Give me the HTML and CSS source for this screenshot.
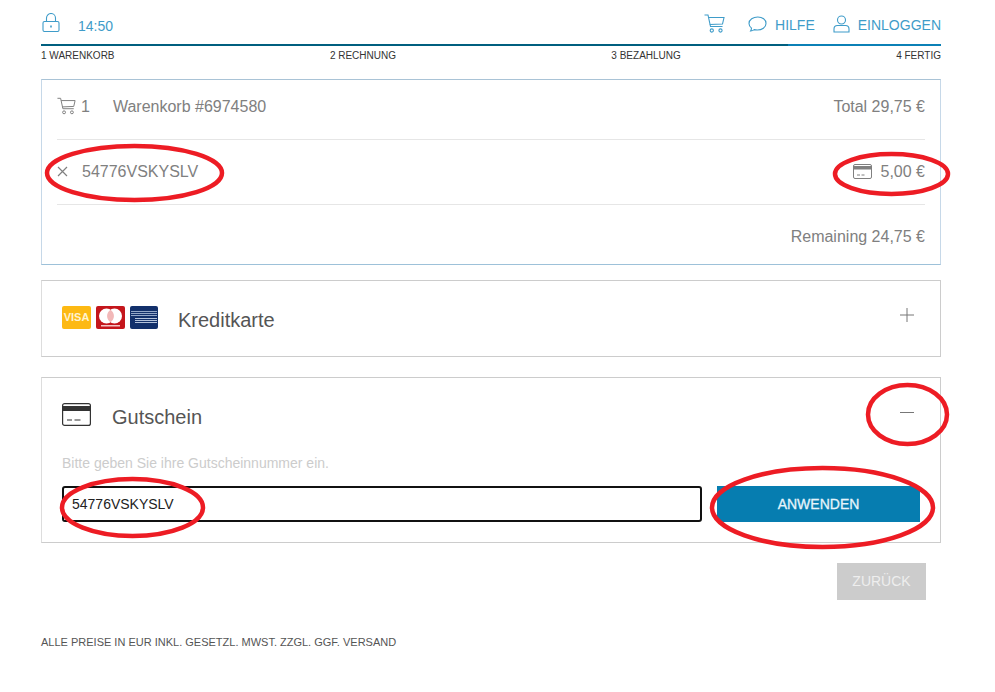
FILE: index.html
```html
<!DOCTYPE html>
<html lang="de">
<head>
<meta charset="utf-8">
<title>Gutschein</title>
<link rel="stylesheet" href="styles.css">
</head>
<body>
<div class="page">
  <header class="top">
    <div class="top-left">
      <svg class="ico-lock" viewBox="0 0 18 19" fill="none" stroke="currentColor" stroke-width="1.1"><rect x="1" y="8.500" width="16" height="10" rx="1.500"/><path d="M4.500 8.500V5a4.500 4.500 0 0 1 9 0v3.500"/><path d="M9 12.500v2" stroke-width="1.600"/></svg>
      <span class="time">14:50</span>
    </div>
    <nav class="top-right">
      <svg class="ico-cart" viewBox="0 0 21 19" fill="none" stroke="currentColor" stroke-width="1.1"><path d="M0.500 1H4l2.500 11.500h12"/><path d="M4.600 3.500H20l-1.500 6.500L5.800 10.500"/><circle cx="7.800" cy="16.500" r="1.600"/><circle cx="16.500" cy="16.500" r="1.600"/></svg>
      <a class="link link-help"><svg class="ico-chat" viewBox="0 0 19 16" fill="none" stroke="currentColor" stroke-width="1.1"><path d="M2.600 15c1.300-.1 2.600-.6 3.600-1.400 1 .3 2 .4 3.100.4 4.600 0 8.700-2.600 8.700-6.600S14.400 1 9.800 1 1 3.500 1 7.400c0 1.900 1 3.500 2.500 4.700-.1 1-.4 2.100-.9 2.900z"/></svg>HILFE</a>
      <a class="link"><svg class="ico-user" viewBox="0 0 17 18" fill="none" stroke="currentColor" stroke-width="1.1"><circle cx="8.500" cy="5" r="4"/><path d="M1 17v-3c0-2 1.500-3.500 3.500-3.500h8c2 0 3.500 1.500 3.500 3.500v3z"/></svg>EINLOGGEN</a>
    </nav>
  </header>
  <div class="progress"><div class="progress-done"></div></div>
  <div class="steps">
    <span>1 WARENKORB</span><span>2 RECHNUNG</span><span>3 BEZAHLUNG</span><span>4 FERTIG</span>
  </div>

  <section class="summary">
    <div class="row row-head">
      <div class="cell">
        <svg class="ico-cart-sm" viewBox="0 0 21 19" fill="none" stroke="currentColor" stroke-width="1.1"><path d="M0.500 1H4l2.500 11.500h12"/><path d="M4.600 3.500H20l-1.500 6.500L5.800 10.500"/><circle cx="7.800" cy="16.500" r="1.600"/><circle cx="16.500" cy="16.500" r="1.600"/></svg>
        <span class="count">1</span>
        <span>Warenkorb #6974580</span>
      </div>
      <span>Total 29,75 €</span>
    </div>
    <div class="row row-item">
      <div class="cell">
        <svg class="ico-x" viewBox="0 0 11 11" fill="none" stroke="currentColor" stroke-width="1.200"><path d="M1 1l9 9M10 1l-9 9"/></svg>
        <span>54776VSKYSLV</span>
      </div>
      <div class="cell">
        <svg class="ico-card-sm" viewBox="0 0 19 15" fill="none" stroke="currentColor" stroke-width="1"><rect x="0.500" y="0.500" width="18" height="14" rx="1.500"/><rect x="0.500" y="2" width="18" height="3.500" fill="currentColor" stroke="none"/><path d="M4 11h3M8.500 11h3"/></svg>
        <span>5,00 €</span>
      </div>
    </div>
    <div class="row row-foot"><span>Remaining 24,75 €</span></div>
  </section>

  <section class="panel panel-credit">
    <div class="cards">
      <div class="card card-visa">VISA</div>
      <svg class="card-svg" viewBox="0 0 29 23"><rect width="29" height="23" rx="2" fill="#c4161c"/><circle cx="10.500" cy="10" r="7.500" fill="#fff"/><circle cx="18.500" cy="10" r="7.500" fill="#fff"/><path d="M14.500 3.700a7.500 7.500 0 0 1 0 12.600a7.500 7.500 0 0 1 0-12.600z" fill="#f2b8b8"/><rect x="5" y="19" width="19" height="1.500" fill="#f3c4c4"/></svg>
      <svg class="card-svg" viewBox="0 0 28 23"><rect width="28" height="23" rx="2" fill="#12306b"/><path d="M1 5.500h26M1 7.500h26M1 9.500h26" stroke="#93a7c8" stroke-width="1.200"/><path d="M5 12.500h22M5 14.500h22M5 16.500h22" stroke="#b4c3db" stroke-width="1.200"/></svg>
    </div>
    <h2 class="panel-title title-credit">Kreditkarte</h2>
    <svg class="toggle toggle-plus" viewBox="0 0 14 14" fill="none" stroke="#777" stroke-width="1"><path d="M7 0v14M0 7h14"/></svg>
  </section>

  <section class="panel panel-voucher">
    <div class="voucher-head">
      <svg class="ico-card" viewBox="0 0 29 23" fill="none" stroke="#333" stroke-width="1.200"><rect x="0.600" y="0.600" width="27.800" height="21.800" rx="2"/><rect x="0.600" y="3" width="27.800" height="5" fill="#333" stroke="none"/><path d="M5 17h5M12.500 17h6"/></svg>
      <h2 class="panel-title title-voucher">Gutschein</h2>
      <svg class="toggle toggle-minus" viewBox="0 0 14 1" fill="none" stroke="#777" stroke-width="1"><path d="M0 .5h14"/></svg>
    </div>
    <p class="hint">Bitte geben Sie ihre Gutscheinnummer ein.</p>
    <div class="voucher-form">
      <input class="voucher-input" type="text" value="54776VSKYSLV">
      <button class="apply" type="button">ANWENDEN</button>
    </div>
  </section>

  <div class="actions"><button class="back" type="button">ZURÜCK</button></div>
  <p class="legal">ALLE PREISE IN EUR INKL. GESETZL. MWST. ZZGL. GGF. VERSAND</p>
</div>

<svg class="marks" viewBox="0 0 995 692" fill="none" stroke="#ed1c24" stroke-width="4.500">
  <ellipse cx="134.500" cy="173" rx="87.500" ry="27"/>
  <ellipse cx="891.500" cy="174" rx="56.500" ry="20"/>
  <ellipse cx="907.500" cy="414.500" rx="39.500" ry="29.500"/>
  <ellipse cx="822.500" cy="507.500" rx="110.500" ry="39.500"/>
  <ellipse cx="132.500" cy="507.500" rx="70.500" ry="28.500"/>
</svg>
</body>
</html>
```

FILE: styles.css
```css
* { box-sizing: border-box; }
html, body { margin: 0; padding: 0; }
body {
  background: #fff;
  font-family: "Liberation Sans", Arial, sans-serif;
  color: #808080;
  position: relative;
  height: 692px;
  overflow: hidden;
}
.page { width: 900px; margin-left: 41px; }

.top { height: 44px; padding-top: 6px; display: flex; justify-content: space-between; align-items: center; color: #3f9cc9; font-size: 14px; }
.top-left, .top-right, .link { display: flex; align-items: center; }
.ico-lock { width: 18px; height: 19px; margin: -6px 0 0 1px; }
.time { margin-left: 18px; margin-top: 2px; }
.ico-cart { width: 21px; height: 19px; margin: -4px 23px 0 0; }
.link-help { margin-right: 18px; }
.ico-chat { width: 19px; height: 16px; margin: -2px 8px 0 0; }
.ico-user { width: 17px; height: 18px; margin: -3px 8px 0 0; }

.progress { height: 2px; background: #005f7f; }
.progress-done { height: 2px; width: 153px; margin-left: auto; background: #0b80b6; }
.steps { display: flex; justify-content: space-between; font-size: 10px; line-height: 12px; color: #333; margin-top: 4px; }

.summary { margin-top: 17px; height: 186px; padding: 0 15px; border: 1px solid #a9c3d6; border-left-color: #c6d8e8; border-right-color: #c6d8e8; border-bottom-color: #9dc1d9; font-size: 16px; line-height: 22px; }
.row { display: flex; justify-content: space-between; align-items: flex-start; }
.cell { display: flex; align-items: center; height: 22px; }
.row-head { height: 60px; padding-top: 16px; border-bottom: 1px solid #e6e6e6; }
.ico-cart-sm { width: 19px; height: 18px; margin-top: -2px; }
.count { margin: 0 23px 0 5px; }
.row-item { height: 65px; padding-top: 21px; border-bottom: 1px solid #e6e6e6; }
.ico-x { width: 11px; height: 11px; margin: -2px 14px 0 0; }
.ico-card-sm { width: 19px; height: 15px; margin: -2px 9px 0 0; }
.row-foot { padding-top: 21px; justify-content: flex-end; }

.panel { border: 1px solid #ccc; border-left-color: #ddd; position: relative; }
.panel-title { margin: 0; font-size: 20px; font-weight: 400; line-height: 24px; color: #555; }
.panel-credit { margin-top: 15px; height: 77px; padding: 25px 26px 0 20px; display: flex; align-items: flex-start; }
.cards { display: flex; gap: 5px; }
.card { width: 29px; height: 23px; border-radius: 2px; background: #fdb913; color: #fff3d0; font-size: 11px; font-weight: 700; line-height: 23px; text-align: center; }
.card-svg { width: 29px; height: 23px; display: block; }
.card-svg + .card-svg { width: 28px; }
.title-credit { margin: 2px 0 0 20px; }
.toggle-plus { width: 14px; height: 14px; margin: 2px 0 0 auto; display: block; }

.panel-voucher { margin-top: 20px; height: 166px; padding: 25px 20px 0; }
.voucher-head { display: flex; align-items: center; height: 23px; }
.ico-card { width: 29px; height: 23px; margin-right: 21px; }
.title-voucher { margin-top: 4px; }
.toggle-minus { width: 14px; height: 1px; margin: -5px 6px 0 auto; display: block; }
.hint { margin: 29px 0 0; font-size: 14px; line-height: 16px; color: #ccc; }
.voucher-form { display: flex; justify-content: space-between; margin-top: 15px; }
.voucher-input { width: 640px; height: 36px; padding: 0 8px; border: 2px solid #111; border-radius: 3px; background: #fff; color: #222; font: 14px/32px "Liberation Sans", Arial, sans-serif; outline: none; }
.apply { width: 203px; height: 36px; padding: 0; border: 0; background: #067db0; color: #e6f4fb; font: 14px "Liberation Sans", Arial, sans-serif; -webkit-text-stroke: 0.3px #e6f4fb; }

.actions { display: flex; justify-content: flex-end; margin-top: 20px; padding-right: 15px; }
.back { width: 89px; height: 37px; padding: 0 0 2px; border: 0; background: #ccc; color: #eee; font: 14px "Liberation Sans", Arial, sans-serif; }
.legal { margin: 36px 0 0; font-size: 11px; line-height: 12px; color: #555; }

.marks { position: absolute; left: 0; top: 0; width: 995px; height: 692px; pointer-events: none; }
```
